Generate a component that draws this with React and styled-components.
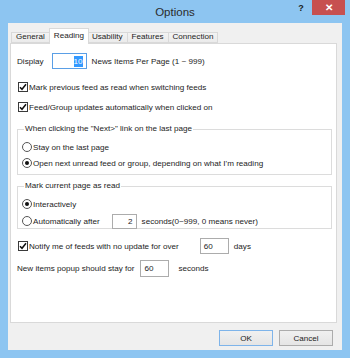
import React from 'react';
import styled, { createGlobalStyle } from 'styled-components';

const GlobalStyle = createGlobalStyle`
  html, body {
    margin: 0;
    padding: 0;
    background: #8dc5f1;
  }
  body {
    font-family: "Liberation Sans", Arial, sans-serif;
    font-size: 8.1px;
    color: #1c1c1c;
  }
`;

const Window = styled.div`
  width: 350px;
  height: 358px;
  box-sizing: border-box;
  background: #8dc5f1;
  display: flex;
  flex-direction: column;
`;

const TitleBar = styled.div`
  height: 23px;
  flex: none;
  display: grid;
  grid-template-columns: 1fr auto 1fr;
`;

const Title = styled.div`
  grid-column: 2;
  align-self: center;
  font-size: 11.5px;
  color: #2b2b2b;
  padding-top: 1px;
`;

const Controls = styled.div`
  grid-column: 3;
  justify-self: end;
  display: flex;
  align-items: flex-start;
  padding-right: 5px;
`;

const HelpButton = styled.div`
  width: 22px;
  height: 15px;
  display: flex;
  align-items: center;
  justify-content: center;
  font-weight: bold;
  font-size: 9px;
  color: #1a1a1a;
`;

const CloseButton = styled.div`
  width: 33px;
  height: 15px;
  background: #c75050;
  color: #fff;
  display: flex;
  align-items: center;
  justify-content: center;
  font-size: 10px;
  font-weight: bold;
`;

const Client = styled.div`
  flex: 1;
  margin: 0 8px 8px;
  background: #f0f0f0;
  padding: 5px 5px 0 2px;
  display: flex;
  flex-direction: column;
  min-height: 0;
`;

const Tabs = styled.div`
  display: flex;
  align-items: flex-end;
  height: 15px;
  padding-left: 2px;
  flex: none;
  position: relative;
  z-index: 1;
`;

const Tab = styled.div`
  box-sizing: border-box;
  height: ${({ $active }) => ($active ? '16px' : '11px')};
  padding: 0 4px;
  margin-bottom: ${({ $active }) => ($active ? '-1px' : '0')};
  margin-left: ${({ $active }) => ($active ? '-1px' : '-1px')};
  margin-right: ${({ $active }) => ($active ? '-1px' : '0')};
  border: 1px solid #d9d9d9;
  border-bottom: ${({ $active }) => ($active ? 'none' : '1px solid #d9d9d9')};
  background: ${({ $active }) => ($active ? '#fff' : 'linear-gradient(#f3f3f3, #ebebeb)')};
  display: flex;
  align-items: center;
  line-height: 1;
  color: #1c1c1c;
  position: relative;
  z-index: ${({ $active }) => ($active ? 2 : 1)};
`;

const Panel = styled.div`
  flex: 1;
  background: #fff;
  border: 1px solid #d9d9d9;
  padding: 9px 4px 0 6px;
  display: flex;
  flex-direction: column;
  min-height: 0;
`;

const Row = styled.div`
  display: flex;
  align-items: center;
  height: ${({ $h }) => $h || 14}px;
  margin-top: ${({ $mt }) => $mt || 0}px;
  gap: ${({ $gap }) => ($gap === undefined ? 5 : $gap)}px;
  white-space: nowrap;
`;

const Field = styled.div`
  box-sizing: border-box;
  width: ${({ $w }) => $w}px;
  height: ${({ $h }) => $h || 16}px;
  border: 1px solid ${({ $focus }) => ($focus ? '#5a9fe6' : '#acacac')};
  background: #fff;
  display: flex;
  align-items: center;
  justify-content: ${({ $right }) => ($right ? 'flex-end' : 'flex-start')};
  padding: 0 3px;
  margin-left: ${({ $ml }) => $ml || 0}px;
  margin-right: ${({ $mr }) => $mr || 0}px;
`;

const Selected = styled.span`
  background: #3399ff;
  color: #fff;
  padding: 1px 0;
`;

const CheckBox = styled.span`
  box-sizing: border-box;
  width: 10px;
  height: 10px;
  border: 1px solid #3a3a3a;
  background: #fff;
  display: flex;
  align-items: center;
  justify-content: center;
  margin-left: 1px;
  flex: none;
`;

const Radio = styled.span`
  box-sizing: border-box;
  width: 10px;
  height: 10px;
  border-radius: 50%;
  border: 1px solid #555;
  background: #fff;
  display: flex;
  align-items: center;
  justify-content: center;
  flex: none;
  &::after {
    content: '';
    width: 4px;
    height: 4px;
    border-radius: 50%;
    background: ${({ $on }) => ($on ? '#111' : 'transparent')};
  }
`;

const Group = styled.fieldset`
  margin: ${({ $mt }) => $mt || 0}px 0 0 0;
  padding: 0 0 0 4px;
  border: 1px solid #dcdcdc;
  height: ${({ $h }) => $h}px;
  box-sizing: border-box;
  display: flex;
  flex-direction: column;
  min-width: 0;
`;

const Legend = styled.legend`
  padding: 0 1px;
  margin-left: 2px;
  line-height: 10px;
`;

const Footer = styled.div`
  flex: none;
  height: 27px;
  display: flex;
  justify-content: flex-end;
  align-items: flex-start;
  padding: 7px 4px 0 0;
  box-sizing: border-box;
  gap: 6px;
`;

const Button = styled.div`
  box-sizing: border-box;
  width: 54px;
  height: 16px;
  border: 1px solid ${({ $default }) => ($default ? '#7eb4ea' : '#acacac')};
  background: linear-gradient(#f0f0f0, #e5e5e5);
  display: flex;
  align-items: center;
  justify-content: center;
  color: #1c1c1c;
`;

const Check = () => (
  <CheckBox>
    <svg width="8" height="8" viewBox="0 0 8 8">
      <path d="M1 4.2 L3 6.3 L7 1.2" fill="none" stroke="#111" strokeWidth="1.5" />
    </svg>
  </CheckBox>
);

export default function App() {
  return (
    <>
      <GlobalStyle />
      <Window>
        <TitleBar>
          <Title>Options</Title>
          <Controls>
            <HelpButton>?</HelpButton>
            <CloseButton>✕</CloseButton>
          </Controls>
        </TitleBar>
        <Client>
          <Tabs>
            <Tab>General</Tab>
            <Tab $active>Reading</Tab>
            <Tab>Usability</Tab>
            <Tab>Features</Tab>
            <Tab>Connection</Tab>
          </Tabs>
          <Panel>
            <Row $h={16} $gap={0}>
              <span>Display</span>
              <Field $w={35} $focus $right $ml={8} $mr={5}>
                <Selected>10</Selected>
              </Field>
              <span>News Items Per Page (1 ~ 999)</span>
            </Row>
            <Row $mt={11} $gap={1}>
              <Check />
              <span>Mark previous feed as read when switching feeds</span>
            </Row>
            <Row $mt={6} $gap={1}>
              <Check />
              <span>Feed/Group updates automatically when clicked on</span>
            </Row>
            <Group $mt={10} $h={51}>
              <Legend>When clicking the "Next&gt;" link on the last page</Legend>
              <Row $mt={6} $gap={1}>
                <Radio />
                <span>Stay on the last page</span>
              </Row>
              <Row $mt={2} $gap={1}>
                <Radio $on />
                <span>Open next unread feed or group, depending on what I'm reading</span>
              </Row>
            </Group>
            <Group $mt={6} $h={48}>
              <Legend>Mark current page as read</Legend>
              <Row $mt={6} $gap={1}>
                <Radio $on />
                <span>Interactively</span>
              </Row>
              <Row $mt={3} $gap={0}>
                <Radio />
                <span style={{ marginLeft: 1 }}>Automatically after</span>
                <Field $w={25} $h={15} $right $ml={12} $mr={5}>2</Field>
                <span>seconds(0~999, 0 means never)</span>
              </Row>
            </Group>
            <Row $mt={9} $h={16} $gap={0}>
              <Check />
              <span style={{ marginLeft: 1 }}>Notify me of feeds with no update for over</span>
              <Field $w={29} $ml={21} $mr={5}>60</Field>
              <span>days</span>
            </Row>
            <Row $mt={6} $h={17} $gap={0}>
              <span>New items popup should stay for</span>
              <Field $w={29} $h={17} $ml={6} $mr={9}>60</Field>
              <span>seconds</span>
            </Row>
          </Panel>
          <Footer>
            <Button $default>OK</Button>
            <Button>Cancel</Button>
          </Footer>
        </Client>
      </Window>
    </>
  );
}
